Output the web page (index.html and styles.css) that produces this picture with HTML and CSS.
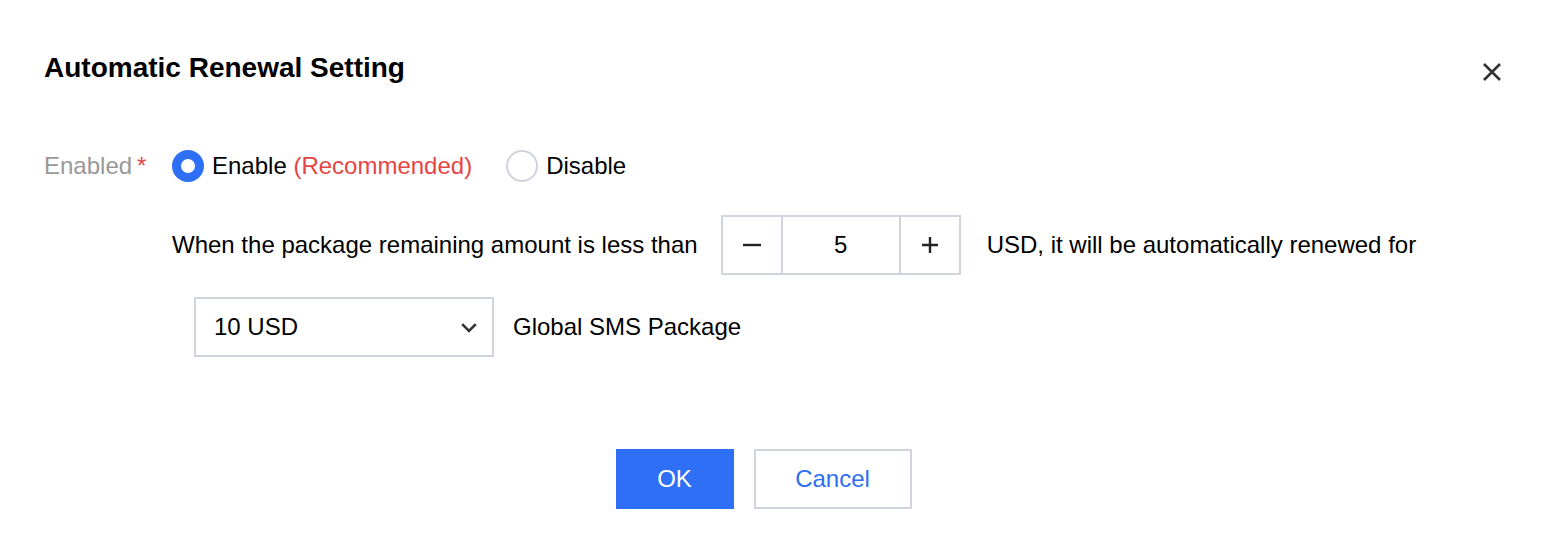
FILE: index.html
```html
<!DOCTYPE html>
<html lang="en">
<head>
<meta charset="utf-8">
<title>Automatic Renewal Setting</title>
<link rel="stylesheet" href="styles.css">
</head>
<body>
<div class="dialog">
  <button class="close" aria-label="Close">
    <svg width="18" height="18" viewBox="0 0 18 18"><path d="M1 1 L17 17 M17 1 L1 17" stroke="#333" stroke-width="2.6" fill="none"/></svg>
  </button>
  <h2 class="title">Automatic Renewal Setting</h2>
  <div class="form-row">
    <label class="form-label">Enabled<span class="req">*</span></label>
    <div class="form-control">
      <div class="radios">
        <label class="radio checked"><span class="radio-dot"></span><span class="radio-text">Enable <span class="rec">(Recommended)</span></span></label>
        <label class="radio"><span class="radio-dot"></span><span class="radio-text">Disable</span></label>
      </div>
      <div class="renew">
        <span>When the package remaining amount is less than</span>
        <div class="stepper">
          <span class="step-btn">
            <svg width="18" height="18" viewBox="0 0 18 18"><path d="M0 9 H18" stroke="#222" stroke-width="2.4"/></svg>
          </span>
          <span class="step-value">5</span>
          <span class="step-btn">
            <svg width="18" height="18" viewBox="0 0 18 18"><path d="M1 9 H17 M9 1 V17" stroke="#222" stroke-width="2.4"/></svg>
          </span>
        </div>
        <span>USD, it will be automatically renewed for</span>
      </div>
      <div class="pkg">
        <div class="select">
          <span>10 USD</span>
          <svg width="16" height="10" viewBox="0 0 16 10"><path d="M1.2 1.2 L8 8 L14.8 1.2" stroke="#333" stroke-width="2.6" fill="none"/></svg>
        </div>
        <span class="pkg-text">Global SMS Package</span>
      </div>
    </div>
  </div>
  <div class="footer">
    <button class="btn btn-primary">OK</button>
    <button class="btn btn-default">Cancel</button>
  </div>
</div>
</body>
</html>
```
FILE: styles.css
```css
* { box-sizing: border-box; }
html, body { margin: 0; padding: 0; background: #fff; }
body {
  font-family: "Liberation Sans", Arial, Helvetica, sans-serif;
  font-size: 24px;
  color: #000;
}
.dialog {
  position: relative;
  width: 1552px;
  height: 554px;
  padding: 48px 69px 0 44px;
}
.close {
  position: absolute;
  top: 63px;
  right: 51px;
  width: 18px;
  height: 18px;
  padding: 0;
  border: 0;
  background: none;
  display: block;
}
.close svg { display: block; }
.title {
  margin: 0;
  font-size: 28px;
  line-height: 40px;
  font-weight: bold;
  color: #000;
}
.form-row {
  display: flex;
  margin-top: 62px;
}
.form-label {
  flex: none;
  width: 128px;
  line-height: 32px;
  color: #999;
}
.req {
  color: #e54545;
  margin-left: 5px;
}
.form-control { flex: 1; }
.radios {
  display: flex;
  height: 32px;
  align-items: center;
}
.radio {
  display: flex;
  align-items: center;
  margin-right: 34px;
  line-height: 32px;
  white-space: nowrap;
}
.radio-dot {
  width: 32px;
  height: 32px;
  border-radius: 50%;
  border: 2px solid #cfd3db;
  background: #fff;
  margin-right: 8px;
  flex: none;
}
.radio.checked .radio-dot {
  border: 9px solid #2e6ff5;
}
.rec { color: #e54545; }
.renew {
  display: flex;
  align-items: center;
  margin-top: 33px;
  white-space: nowrap;
}
.stepper {
  display: flex;
  height: 60px;
  border: 2px solid #d0d4dc;
  margin: 0 26px 0 23px;
}
.step-btn {
  width: 58px;
  display: flex;
  align-items: center;
  justify-content: center;
}
.step-btn svg { display: block; }
.step-value {
  width: 120px;
  border-left: 2px solid #d0d4dc;
  border-right: 2px solid #d0d4dc;
  display: flex;
  align-items: center;
  justify-content: center;
}
.pkg {
  display: flex;
  align-items: center;
  margin-top: 22px;
  margin-left: 22px;
}
.select {
  width: 300px;
  height: 60px;
  border: 2px solid #d0d4dc;
  display: flex;
  align-items: center;
  justify-content: space-between;
  padding: 0 15px 0 18px;
}
.select svg { display: block; margin-top: 1px; }
.pkg-text { margin-left: 19px; }
.footer {
  display: flex;
  justify-content: center;
  gap: 20px;
  margin-top: 92px;
}
.btn {
  height: 60px;
  font-family: "Liberation Sans", Arial, Helvetica, sans-serif;
  font-size: 24px;
  padding: 0;
  cursor: pointer;
}
.btn-primary {
  width: 118px;
  background: #2e6ff5;
  color: #fff;
  border: 0;
}
.btn-default {
  width: 158px;
  background: #fff;
  color: #2e6ff5;
  border: 2px solid #d0d4dc;
}
```
